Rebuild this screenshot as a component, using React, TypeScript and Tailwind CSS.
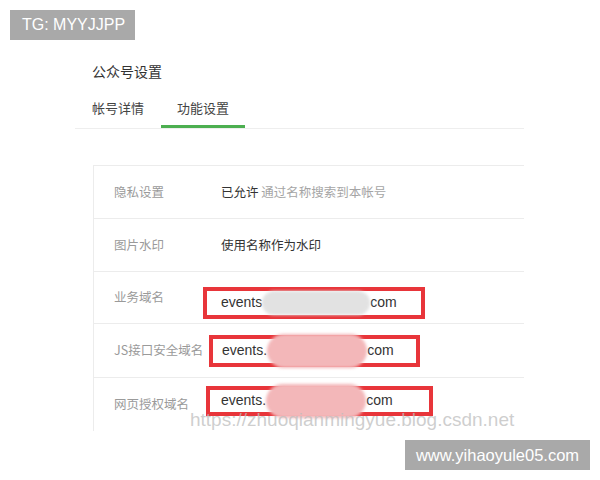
import React from 'react';

const cjk = { fontFamily: '"Noto Sans CJK SC", "Noto Sans", sans-serif' };
const latin = { fontFamily: '"Liberation Sans", Arial, sans-serif' };

function Domain({ blob, box }: { blob: 'gray' | 'pink'; box: string }) {
  return (
    <div className={`flex items-center border-[4px] border-[#e8353a] bg-white ${box}`} style={latin}>
      <span className="text-[14px] text-[#333]">{blob === 'gray' ? 'events' : 'events.'}</span>
      {blob === 'gray' ? (
        <span className="h-[24px] w-[108px] rounded-full bg-[#e2e2e2] blur-[1.5px]" />
      ) : (
        <span className="-my-[6px] h-[34px] w-[100px] rounded-full bg-[#f3b7b9] blur-[1.5px]" />
      )}
      <span className="text-[14px] text-[#333]">com</span>
    </div>
  );
}

export default function App() {
  return (
    <div className="relative h-[480px] w-[600px] overflow-hidden bg-white" style={cjk}>
      {/* top badge */}
      <div className="absolute left-[10px] top-[10px] flex h-[30px] w-[125px] items-center bg-[#a9a9a9] pl-[12px] text-[16px] text-white" style={latin}>
        TG: MYYJJPP
      </div>

      <div className="ml-[75px] w-[449px] pt-[61px]">
        <div className="pl-[17px] text-[14px] leading-[20px] text-[#333]">公众号设置</div>
        <div className="mt-[18px] flex border-b border-[#eeeeee] pl-[17px] text-[13px] text-[#444]">
          <div className="pb-[11px] leading-[18px]">帐号详情</div>
          <div className="ml-[17px] border-b-[3px] border-[#4caf50] px-[16px] pb-[8px] leading-[18px]">功能设置</div>
        </div>

        <div className="ml-[18px] mt-[36px] border-l border-t border-[#ececec] text-[12.5px]">
          <div className="flex h-[53px] items-center border-b border-[#ececec] pl-[20px]">
            <div className="w-[107px] text-[#9a9a9a]">隐私设置</div>
            <div className="text-[#333]">已允许 <span className="text-[#a5a5a5]">通过名称搜索到本帐号</span></div>
          </div>
          <div className="flex h-[53px] items-center border-b border-[#ececec] pl-[20px]">
            <div className="w-[107px] text-[#9a9a9a]">图片水印</div>
            <div className="text-[#333]">使用名称作为水印</div>
          </div>
          <div className="flex h-[52px] items-center border-b border-[#ececec] pl-[20px]">
            <div className="w-[89px] text-[#9a9a9a]">业务域名</div>
            <div className="mt-[10px]">
              <Domain blob="gray" box="h-[32px] w-[222px] pl-[14px]" />
            </div>
          </div>
          <div className="flex h-[54px] items-center border-b border-[#ececec] pl-[20px]">
            <div className="w-[95px] text-[#9a9a9a]">JS接口安全域名</div>
            <div>
              <Domain blob="pink" box="h-[32px] w-[211px] pl-[9px]" />
            </div>
          </div>
          <div className="flex h-[53px] items-center pl-[20px]">
            <div className="w-[92px] text-[#9a9a9a]">网页授权域名</div>
            <div className="-mt-[8px]">
              <Domain blob="pink" box="h-[30px] w-[227px] pl-[11px]" />
            </div>
          </div>
        </div>
      </div>

      {/* watermark */}
      <div className="absolute left-[190px] top-[406px] text-[19px] text-[rgba(190,190,190,0.75)]" style={latin}>
        https://zhuoqianmingyue.blog.csdn.net
      </div>

      {/* bottom badge */}
      <div className="absolute left-[405px] top-[440px] flex h-[30px] w-[185px] items-center justify-center bg-[#a9a9a9] text-[16.5px] text-white" style={latin}>
        www.yihaoyule05.com
      </div>
    </div>
  );
}
